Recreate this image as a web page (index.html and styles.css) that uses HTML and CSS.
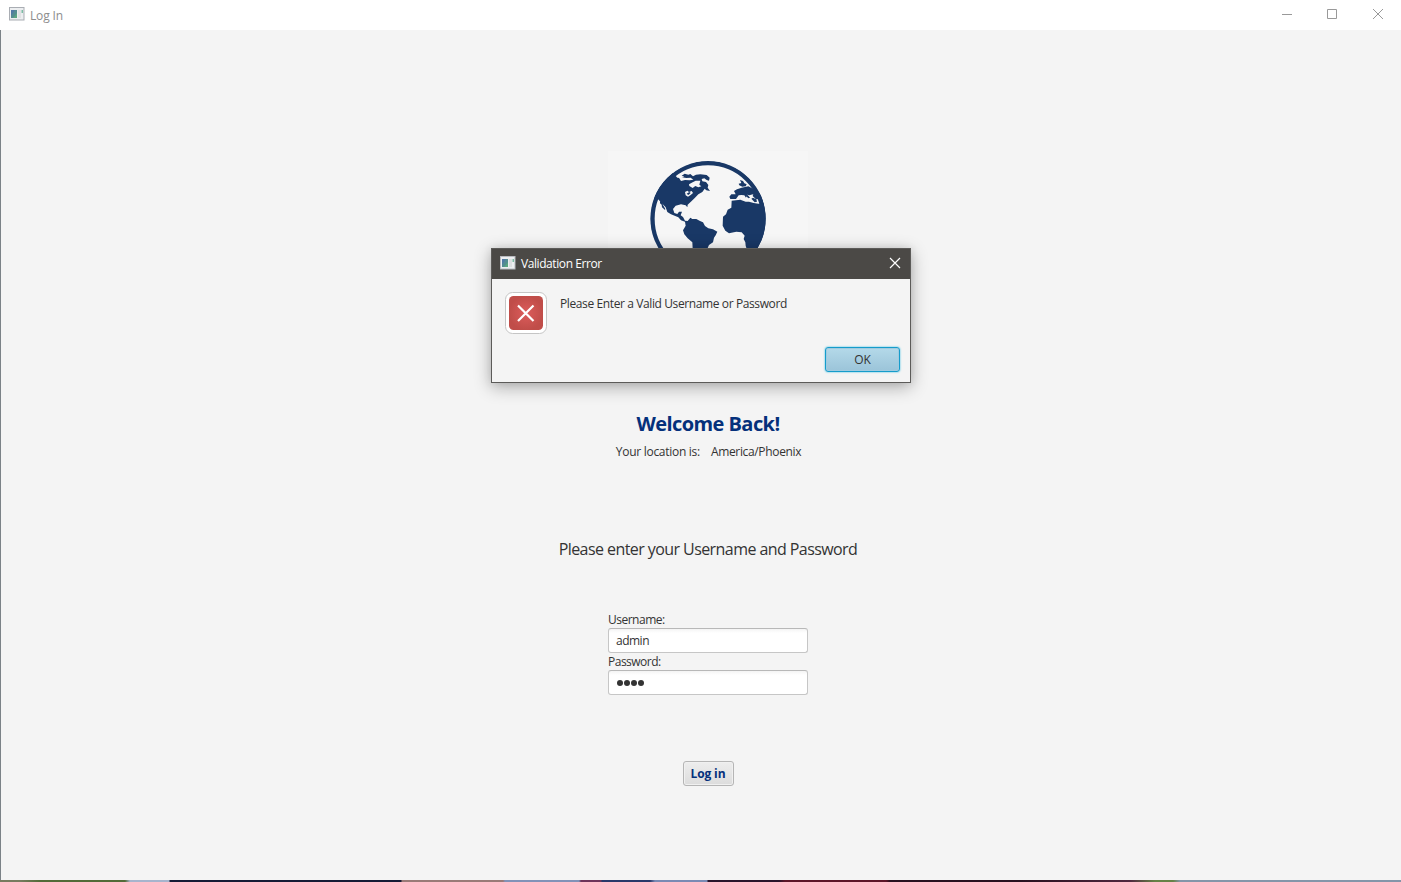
FILE: index.html
```html
<!DOCTYPE html>
<html lang="en">
<head>
<meta charset="utf-8">
<title>Log In</title>
<link rel="stylesheet" href="styles.css">
</head>
<body>
<div class="window">
  <header class="titlebar">
    <svg class="app-icon" width="16" height="14" viewBox="0 0 16 14"><rect x=".5" y=".5" width="14.5" height="12.5" fill="#eceef0" stroke="#a9adb3"/><rect x="2" y="3" width="6" height="8" fill="#548c91"/><path d="M2 3h4l-4 6z" fill="#517aa5"/><path d="M4 11l4-5v5z" fill="#5ba681"/><rect x="9" y="3" width="3" height="8" fill="#e0e2e4"/><rect x="12.500" y="3" width="1.500" height="3" fill="#7cbca4"/></svg>
    <span class="title">Log In</span>
    <div class="controls">
      <svg width="12" height="12" viewBox="0 0 12 12"><path d="M1 6.500h10" stroke="#999" fill="none"/></svg>
      <svg width="12" height="12" viewBox="0 0 12 12"><path d="M1.500 1.500h9v9h-9z" stroke="#999" fill="none"/></svg>
      <svg width="12" height="12" viewBox="0 0 12 12"><path d="M1 1l10 10M11 1L1 11" stroke="#999" fill="none"/></svg>
    </div>
  </header>
  <main class="content">
    <div class="logo">
      <svg width="126" height="126" viewBox="0 0 378 378">
        <defs><clipPath id="disc"><circle cx="189" cy="191" r="173"/></clipPath></defs>
        <g fill="#193866" clip-path="url(#disc)">
          <circle cx="189" cy="191" r="167" fill="none" stroke="#193866" stroke-width="14"/>
          <path d="M97 68L108 69 118 65 110 62 119 56 130 59 136 57 144 64 153 59 166 58 185 60 194 68 192 77 185 75 178 70 170 72 172 79 183 81 190 90 188 98 195 108 184 106 179 101 172 111 160 118 150 128 140 138 128 149 127 157 122 151 108 148 92 152 84 162 88 174 97 177 102 170 111 170 107 181 114 186 120 197 128 198 136 188 142 192 154 192 165 198 174 202 180 213 190 220 204 223 217 230 212 241 207 248 204 262 192 270 184 288 160 330 145 320 142 262 128 250 118 238 114 226 122 212 120 200 108 196 100 187 89 182 78 178 67 171 62 157 49 143 38 131 26 133 38 98 62 65 82 52z"/>
          <path d="M45 138L52 142 54 150 61 162 60 165 51 157 50 149 45 145z"/>
          <path d="M285 75L294 78 298 85 305 88 302 94 292 95 283 91 281 86 289 84zM276 103L290 98 310 94 340 110 370 145 354 151 346 144 342 133 334 132 336 140 329 142 319 131 311 121 305 121 303 128 298 121 289 120 281 121 273 132 256 132 253 125 259 118 272 118 267 108z"/>
          <path d="M260 137L286 134 302 140 312 140 326 144 340 146 370 144 368 220 349 275 320 320 309 295 302 272 301 262 296 252 299 242 290 232 274 230 252 235 241 227 233 212 234 185 243 178 248 164 259 158z"/>
        </g>
        <g fill="#f6f6f6">
          <path d="M143 82L152 77 166 77 163 89 169 94 160 97 151 93 143 99 133 93 132 88zM120 111L127 107 132 111 140 108 144 114 137 120 129 125 122 121zM98 62L111 67 124 69 137 68 145 74 134 76 120 75 108 78z"/>
          <path d="M306 119L314 121 318 119 325 118 323 123 333 133 324 128 318 132 308 125z"/>
        </g>
        <path d="M125 116l8-5 4 3-7 6zM304 119l5 2 6 7-4 2-8-6z" fill="#193866"/>
      </svg>
    </div>
    <h1>Welcome Back!</h1>
    <div class="location"><span>Your location is:</span><span class="zone">America/Phoenix</span></div>
    <p class="prompt">Please enter your Username and Password</p>
    <form class="form">
      <label>Username:</label>
      <div class="field">admin</div>
      <label>Password:</label>
      <div class="field password"><i></i><i></i><i></i><i></i></div>
    </form>
    <button class="login">Log in</button>
  </main>
  <footer class="desktop-edge"></footer>
</div>
<section class="dialog">
  <header class="dialog-bar">
    <svg class="dialog-icon" width="16" height="14" viewBox="0 0 16 14"><rect x=".5" y=".5" width="14.500" height="12.500" fill="#eceef0" stroke="#b9bbc0"/><rect x="2" y="3" width="6" height="8" fill="#548c91"/><path d="M2 3h4l-4 6z" fill="#517aa5"/><path d="M4 11l4-5v5z" fill="#5ba681"/><rect x="9" y="3" width="3" height="8" fill="#dddfe1"/><rect x="12.500" y="3" width="1.500" height="3" fill="#7cbca4"/></svg>
    <span class="dialog-title">Validation Error</span>
    <svg class="close" width="12" height="12" viewBox="0 0 12 12"><path d="M1 1l10 10M11 1L1 11" stroke="#fff" stroke-width="1.200" fill="none"/></svg>
  </header>
  <div class="dialog-body">
    <svg width="42" height="42" viewBox="0 0 42 42">
      <defs><radialGradient id="red"><stop offset="0" stop-color="#dc5c5b"/><stop offset="1" stop-color="#c04d49"/></radialGradient></defs>
      <rect x=".5" y=".5" width="41" height="41" rx="7" fill="#fff" stroke="#c5c5c5"/>
      <rect x="4" y="4" width="34" height="34" rx="4.500" fill="url(#red)"/>
      <path d="M13 13.500l15.500 15.500M28.500 13.500L13 29" stroke="#fff" stroke-width="2.200"/>
    </svg>
    <p>Please Enter a Valid Username or Password</p>
  </div>
  <div class="actions"><button class="ok">OK</button></div>
</section>
</body>
</html>
```
FILE: styles.css
```css
* { box-sizing: border-box; }
body { margin: 0; width: 1401px; height: 882px; overflow: hidden; position: relative; font: 12px/16px "Open Sans", "Noto Sans", sans-serif; letter-spacing: -.39px; color: #333; }
h1, p { margin: 0; white-space: nowrap; }
span { white-space: nowrap; }
svg { display: block; flex: none; }
.window { height: 882px; display: flex; flex-direction: column; background: #f4f4f4; }
.titlebar { height: 30px; flex: none; display: flex; align-items: center; padding: 0 17px 2px 9px; background: #fff; color: #8d8d8d; }
.title { margin-left: 5px; padding-top: 3px; letter-spacing: -.15px; }
.controls { margin-left: auto; display: flex; }
.controls svg + svg { margin-left: 33px; }
.controls svg + svg + svg { margin-left: 34px; }
.content { flex: 1; min-height: 0; display: flex; flex-direction: column; align-items: center; padding: 121px 0 0 14px; border-left: 1px solid #7b8287; }
.logo { width: 200px; height: 200px; flex: none; background: #f6f6f6; display: flex; justify-content: center; padding-top: 4px; }
h1 { margin-top: 59px; font-size: 20px; line-height: 28px; font-weight: 700; letter-spacing: -.56px; color: #04307b; }
.location { margin-top: 6px; padding-left: 1px; display: flex; gap: 11px; letter-spacing: -.28px; }
.zone { letter-spacing: -.34px; }
.prompt { margin-top: 78px; font-size: 16px; line-height: 22px; letter-spacing: -.57px; }
.form { width: 200px; margin-top: 52px; display: flex; flex-direction: column; letter-spacing: -.5px; }
label { height: 16px; }
.field { height: 25px; padding: 4px 7px; margin-bottom: 1px; border: 1px solid #c6c6c6; border-top-color: #b8b8b8; border-radius: 3px; background: linear-gradient(#f4f4f4, #fff 4px); }
.password { display: flex; align-items: center; gap: 1.300px; margin-bottom: 0; padding-top: 5px; padding-left: 7.500px; }
.password i { width: 6px; height: 6px; border-radius: 50%; background: #333; }
button { font: inherit; letter-spacing: inherit; padding: 0; display: flex; align-items: center; justify-content: center; }
.login { margin-top: 66px; width: 51px; height: 25px; border: 1px solid #b5b5b5; border-radius: 3px; background: linear-gradient(#ededed, #dcdcdc); box-shadow: inset 0 0 0 1px #f0f0f0; color: #04307b; font-weight: 700; letter-spacing: -.15px; }
.desktop-edge { height: 2px; flex: none; background: linear-gradient(90deg, #777b5f 0 20px, #526b38 40px 125px, #a7b4cd 130px 169px, #151a35 170px 401px, #997a77 402px 503px, #8292b8 505px 579px, #6e345a 581px 601px, #29386a 602px 650px, #7b8ab4 655px 707px, #29142b 708px 779px, #5d1528 785px 886px, #28101f 890px 1020px, #50283f 1130px, #668247 1155px 1173px, #8495a9 1180px); }
.dialog { position: absolute; left: 491px; top: 248px; width: 420px; height: 135px; border: 1px solid #5c5b59; background: #f4f4f4; box-shadow: 0 4px 16px rgba(0,0,0,.3), 0 0 8px rgba(0,0,0,.08); display: flex; flex-direction: column; }
.dialog-bar { height: 30px; flex: none; display: flex; align-items: center; padding: 0 9px 2px 8px; color: #fff; background: #4b4946; }
.dialog-title { margin-left: 5px; padding-top: 2px; letter-spacing: -.42px; }
.close { margin-left: auto; }
.dialog-body { display: flex; gap: 13px; padding: 13px 13px 0; }
.dialog-body p { padding-top: 4px; }
.actions { margin-top: auto; padding: 0 10px 10px; display: flex; justify-content: flex-end; }
.ok { width: 75px; height: 25px; border: 1px solid #159ccb; border-radius: 3px; background: linear-gradient(#b4d9e9, #9bc4d9); box-shadow: 0 0 2px #27b7e0, inset 0 0 0 1px #a0cadf; color: #333; letter-spacing: -.2px; }
```
